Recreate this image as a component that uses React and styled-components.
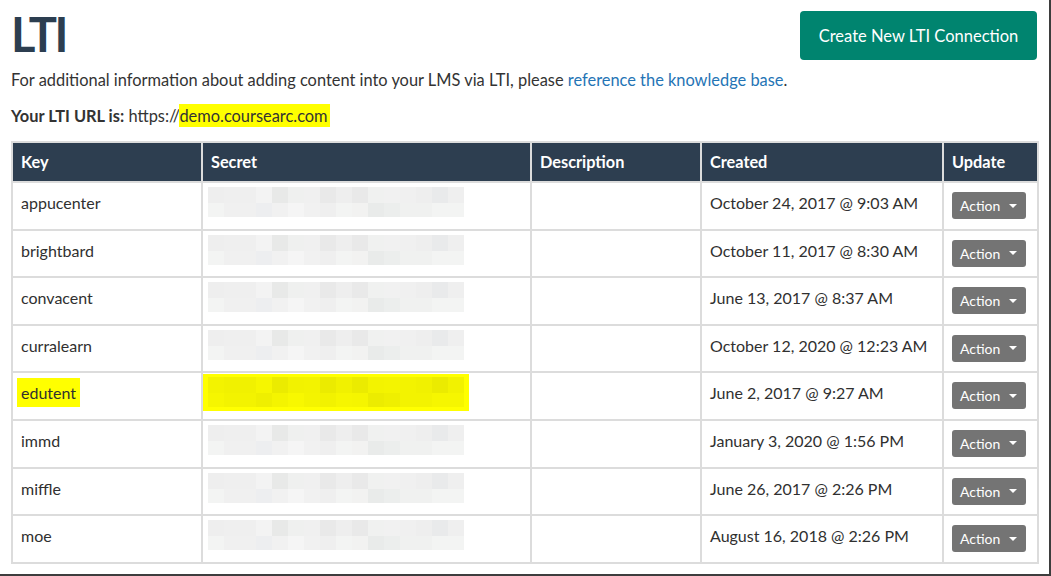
import React from "react";
import styled, { createGlobalStyle } from "styled-components";

const Global = createGlobalStyle`
  html, body { margin: 0; padding: 0; background: #fff; }
  body { font-family: Lato, "Open Sans", sans-serif; color: #333; }
  * { box-sizing: border-box; }
`;

const Frame = styled.div`
  width: 1051px;
  height: 576px;
  overflow: hidden;
  border-right: 2px solid #3d3d3d;
  border-bottom: 2px solid #3d3d3d;
  padding: 10px 12px 0 11px;
`;

const TopBar = styled.div`
  display: flex;
  justify-content: space-between;
  align-items: flex-start;
`;

const Title = styled.h1`
  margin: 0;
  font-size: 47px;
  line-height: 48px;
  font-weight: 700;
  color: #2c3e50;
  letter-spacing: -2.5px;
`;

const PrimaryButton = styled.button`
  margin-top: 1px;
  width: 237px;
  height: 49px;
  border: none;
  border-radius: 4px;
  background: #00846f;
  color: #fff;
  font-family: Lato, sans-serif;
  font-size: 16.5px;
  cursor: pointer;
`;

const Text = styled.p`
  margin: ${(p) => p.$mt || 0}px 0 0;
  font-size: 16.4px;
  line-height: 24px;
  color: #333;
`;

const Link = styled.a`
  color: #2474b5;
  text-decoration: none;
`;

const Strong = styled.strong`
  font-weight: 700;
`;

const Mark = styled.span`
  background: #ffff00;
  padding: 2px 2px 2px 0;
`;

const Table = styled.table`
  margin-top: 13px;
  width: 1026px;
  table-layout: fixed;
  border-collapse: collapse;
  border: 2px solid #dcdcdc;
  font-size: 16px;
`;

const Th = styled.th`
  background: #2d3e50;
  color: #fff;
  font-weight: 700;
  font-size: 16.3px;
  text-align: left;
  padding: 0 8px;
  height: 40px;
  line-height: 24px;
  border: 2px solid #dcdcdc;
  border-top: none;
`;

const Td = styled.td`
  border: 2px solid #dcdcdc;
  vertical-align: top;
  padding: ${(p) => (p.$flush ? "1px 0 0 0" : "8px 8px 0")};
  height: 47.6px;
  line-height: 24px;
  color: #303030;
  white-space: nowrap;
`;

const KeyMark = styled.span`
  display: inline-block;
  background: ${(p) => (p.$on ? "#ffff00" : "transparent")};
  padding: 3px 4px 2px;
  margin: -3px -4px 0;
`;

const ActionButton = styled.button`
  display: inline-flex;
  align-items: center;
  gap: 9px;
  margin-top: 1px;
  height: 27px;
  padding: 0 9px 0 8px;
  border: none;
  border-radius: 3px;
  background: #747474;
  color: #fff;
  font-family: Lato, sans-serif;
  font-size: 14px;
`;

const Caret = styled.span`
  width: 0;
  height: 0;
  border-left: 4px solid transparent;
  border-right: 4px solid transparent;
  border-top: 4px solid #fff;
`;

const row1 = ["#eeeeee","#efefef","#efefef","#f3f3f3","#e8e9e8","#eff0ef","#f0f0f0","#e9e9e9","#eeeeee","#e9e9e9","#f0f1f0","#f1f1f1","#f0f0f0","#eeeeee","#e9eaeb","#efefef"];
const row2 = ["#f3f4f3","#f0f0f0","#f0f0f0","#edeef0","#f1f1f1","#f5f5f5","#f1f1f1","#efefef","#f3f4f3","#f2f2f1","#e9ebea","#eceeed","#f0f1f0","#f0f1f0","#f3f4f3","#f3f4f3"];
const yrow1 = ["#f3f300","#f1f100","#f1f100","#f6f600","#ebeb00","#f2f200","#f3f300","#ebeb00","#f1f100","#ebeb00","#f3f300","#f4f400","#f3f300","#f1f100","#ebeb00","#f2f200"];
const yrow2 = ["#f6f600","#f3f300","#f3f300","#efef00","#f4f400","#f8f800","#f4f400","#f2f200","#f6f600","#f5f500","#ecec00","#efef00","#f3f300","#f3f300","#f6f600","#f6f600"];

function SecretBlur({ highlight }) {
  const a = highlight ? yrow1 : row1;
  const b = highlight ? yrow2 : row2;
  return (
    <svg width="266" height="37" viewBox="0 0 266 37" style={{ display: "block" }}>
      {highlight && <rect x="0" y="0" width="266" height="37" fill="#ffff00" />}
      {a.map((c, i) => (
        <rect key={"a" + i} x={5 + i * 16} y={3} width="16" height="16" fill={c} />
      ))}
      {b.map((c, i) => (
        <rect key={"b" + i} x={5 + i * 16} y={19} width="16" height="14" fill={c} />
      ))}
    </svg>
  );
}

const rows = [
  { key: "appucenter", created: "October 24, 2017 @ 9:03 AM" },
  { key: "brightbard", created: "October 11, 2017 @ 8:30 AM" },
  { key: "convacent", created: "June 13, 2017 @ 8:37 AM" },
  { key: "curralearn", created: "October 12, 2020 @ 12:23 AM" },
  { key: "edutent", created: "June 2, 2017 @ 9:27 AM", hl: true },
  { key: "immd", created: "January 3, 2020 @ 1:56 PM" },
  { key: "miffle", created: "June 26, 2017 @ 2:26 PM" },
  { key: "moe", created: "August 16, 2018 @ 2:26 PM" },
];

export default function App() {
  return (
    <>
      <Global />
      <Frame>
        <TopBar>
          <Title>LTI</Title>
          <PrimaryButton>Create New LTI Connection</PrimaryButton>
        </TopBar>
        <Text $mt={8}>
          For additional information about adding content into your LMS via LTI, please{" "}
          <Link href="#">reference the knowledge base</Link>.
        </Text>
        <Text $mt={12}>
          <Strong>Your LTI URL is:</Strong> https://<Mark>demo.coursearc.com</Mark>
        </Text>
        <Table>
          <colgroup>
            <col style={{ width: 190 }} />
            <col style={{ width: 329 }} />
            <col style={{ width: 170 }} />
            <col style={{ width: 242 }} />
            <col style={{ width: 95 }} />
          </colgroup>
          <thead>
            <tr>
              <Th>Key</Th>
              <Th>Secret</Th>
              <Th>Description</Th>
              <Th>Created</Th>
              <Th>Update</Th>
            </tr>
          </thead>
          <tbody>
            {rows.map((r) => (
              <tr key={r.key}>
                <Td>
                  <KeyMark $on={r.hl}>{r.key}</KeyMark>
                </Td>
                <Td $flush>
                  <SecretBlur highlight={r.hl} />
                </Td>
                <Td />
                <Td>{r.created}</Td>
                <Td>
                  <ActionButton>
                    Action <Caret />
                  </ActionButton>
                </Td>
              </tr>
            ))}
          </tbody>
        </Table>
      </Frame>
    </>
  );
}
